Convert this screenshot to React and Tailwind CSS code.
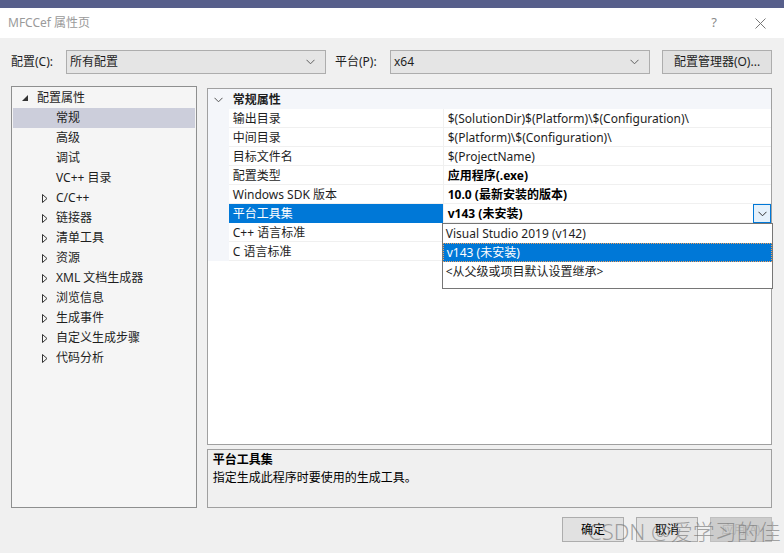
import React from 'react'

const TREE = [
  { label: '配置属性', level: 0, icon: 'open' },
  { label: '常规', level: 1, selected: true },
  { label: '高级', level: 1 },
  { label: '调试', level: 1 },
  { label: 'VC++ 目录', level: 1 },
  { label: 'C/C++', level: 1, icon: 'closed' },
  { label: '链接器', level: 1, icon: 'closed' },
  { label: '清单工具', level: 1, icon: 'closed' },
  { label: '资源', level: 1, icon: 'closed' },
  { label: 'XML 文档生成器', level: 1, icon: 'closed' },
  { label: '浏览信息', level: 1, icon: 'closed' },
  { label: '生成事件', level: 1, icon: 'closed' },
  { label: '自定义生成步骤', level: 1, icon: 'closed' },
  { label: '代码分析', level: 1, icon: 'closed' },
]

const PROPS = [
  { name: '输出目录', value: '$(SolutionDir)$(Platform)\\$(Configuration)\\' },
  { name: '中间目录', value: '$(Platform)\\$(Configuration)\\' },
  { name: '目标文件名', value: '$(ProjectName)' },
  { name: '配置类型', value: '应用程序(.exe)', bold: true },
  { name: 'Windows SDK 版本', value: '10.0 (最新安装的版本)', bold: true },
  { name: '平台工具集', value: 'v143 (未安装)', bold: true, selected: true },
  { name: 'C++ 语言标准', value: '' },
  { name: 'C 语言标准', value: '' },
]

function Chevron({ color = '#606060' }) {
  return (
    <svg width="9" height="6" viewBox="0 0 9 6" fill="none">
      <path d="M0.5 0.8 L4.5 4.8 L8.5 0.8" stroke={color} strokeWidth="1" />
    </svg>
  )
}

function Combo({ value, width }) {
  return (
    <div className={`${width} h-[24px] flex items-center justify-between bg-[#e5e5e5] border border-[#adadad] pl-[3px] pr-[10px]`}>
      <span>{value}</span>
      <Chevron />
    </div>
  )
}

function TreeIcon({ kind }) {
  if (kind === 'open')
    return (
      <svg width="6" height="6" viewBox="0 0 6 6">
        <polygon points="6,0 6,6 0,6" fill="#333" />
      </svg>
    )
  if (kind === 'closed')
    return (
      <svg width="6" height="9" viewBox="0 0 6 9" fill="none">
        <polygon points="0.5,0.5 5,4.5 0.5,8.5" stroke="#333" strokeWidth="1" />
      </svg>
    )
  return null
}

function Button({ children, disabled }) {
  return (
    <div className={`w-[62px] h-[25px] flex items-center justify-center border ${disabled ? 'bg-[#cccccc] border-[#bfbfbf] text-[#b4b4b4]' : 'bg-[#e1e1e1] border-[#adadad] text-black'}`}>
      {children}
    </div>
  )
}

export default function App() {
  return (
    <div className="w-[784px] h-[553px] flex flex-col overflow-hidden text-[12px] text-[#1e1e1e] font-['Noto_Sans','Noto_Sans_CJK_SC',sans-serif] relative">
      <div className="h-[8px] bg-[#575f8b]" />
      <div className="h-[30px] bg-white flex items-center pl-[8px]">
        <span className="text-[#9a9a9a] flex-1">MFCCef 属性页</span>
        <span className="text-[#8a8a8a] text-[13px] mr-[38px]">?</span>
        <svg width="11" height="11" viewBox="0 0 11 11" className="mr-[18px]">
          <path d="M0.5 0.5 L10.5 10.5 M10.5 0.5 L0.5 10.5" stroke="#777" strokeWidth="1" />
        </svg>
      </div>

      <div className="flex-1 bg-[#f0f0f0] flex flex-col pl-[11px] pr-[12px] pt-[11px]">
        {/* toolbar */}
        <div className="h-[25px] flex items-center">
          <span className="w-[55px]">配置(C):</span>
          <Combo value="所有配置" width="w-[260px]" />
          <span className="ml-[9px] w-[55px]">平台(P):</span>
          <Combo value="x64" width="w-[260px]" />
          <div className="ml-[12px] w-[110px] h-[24px] flex items-center justify-center bg-[#e1e1e1] border border-[#adadad]">
            配置管理器(O)...
          </div>
        </div>

        {/* main */}
        <div className="mt-[12px] h-[422px] flex">
          <div className="w-[186px] h-full border border-[#8e8f8f] bg-[#f5f5f5] pt-px">
            {TREE.map((t) => (
              <div
                key={t.label}
                className={`h-[20px] mx-px flex items-center ${t.selected ? 'bg-[#cccedb]' : ''}`}
              >
                {t.level === 0 ? (
                  <>
                    <div className="w-[9px]" />
                    <div className="w-[15px] flex items-center"><TreeIcon kind={t.icon} /></div>
                  </>
                ) : (
                  <>
                    <div className="w-[29px]" />
                    <div className="w-[14px] flex items-center"><TreeIcon kind={t.icon} /></div>
                  </>
                )}
                <span>{t.label}</span>
              </div>
            ))}
          </div>

          <div className="ml-[10px] w-[566px] flex flex-col">
            <div className="mt-[2px] h-[357px] border border-[#a0a0a0] bg-white relative">
              <div className="h-[20px] pt-px bg-[#f4f6fa] flex items-center">
                <div className="w-[21px] flex justify-center"><Chevron color="#555" /></div>
                <span className="font-bold pl-[4px]">常规属性</span>
              </div>
              {PROPS.map((p) => (
                <div key={p.name} className="h-[19px] flex">
                  <div className="w-[21px] bg-[#f4f6fa]" />
                  <div className={`w-[214px] pl-[4px] pt-px flex items-center border-b ${p.selected ? 'bg-[#0078d7] text-white border-[#0078d7]' : 'border-[#f0f0f0]'}`}>
                    {p.name}
                  </div>
                  <div className={`flex-1 relative pl-[4px] pt-px flex items-center border-l border-b border-[#f0f0f0] ${p.bold ? 'font-bold text-black' : ''}`}>
                    {p.value}
                    {p.selected && (
                      <div className="absolute right-0 top-0 w-[18px] h-[19px] border border-[#0078d7] bg-[#e5f1fb] flex items-center justify-center">
                        <Chevron color="#333" />
                      </div>
                    )}
                  </div>
                </div>
              ))}

              <div className="absolute left-[234px] top-[134px] w-[331px] h-[66px] bg-white border border-[#767676]">
                <div className="h-[19px] pl-[3px] flex items-center">Visual Studio 2019 (v142)</div>
                <div className="h-[19px] pl-[3px] flex items-center bg-[#0078d7] text-white border border-dotted border-[#f3a05a]">v143 (未安装)</div>
                <div className="h-[19px] pl-[3px] flex items-center">&lt;从父级或项目默认设置继承&gt;</div>
              </div>
            </div>

            <div className="mt-[4px] h-[59px] border border-[#a0a0a0] bg-[#f0f0f0] px-[5px] pt-[1px]">
              <div className="h-[18px] leading-[18px] font-bold text-black">平台工具集</div>
              <div className="h-[18px] leading-[18px] text-black">指定生成此程序时要使用的生成工具。</div>
            </div>
          </div>
        </div>

        {/* buttons */}
        <div className="mt-[9px] flex justify-end gap-[12px]">
          <Button>确定</Button>
          <Button>取消</Button>
          <Button disabled>应用(A)</Button>
        </div>
      </div>

      <div className="absolute left-[588px] top-[518px] text-[22px] leading-[26px] text-[rgba(110,110,110,0.6)] font-light whitespace-nowrap pointer-events-none">
        CSDN @爱学习的佳
      </div>
    </div>
  )
}
